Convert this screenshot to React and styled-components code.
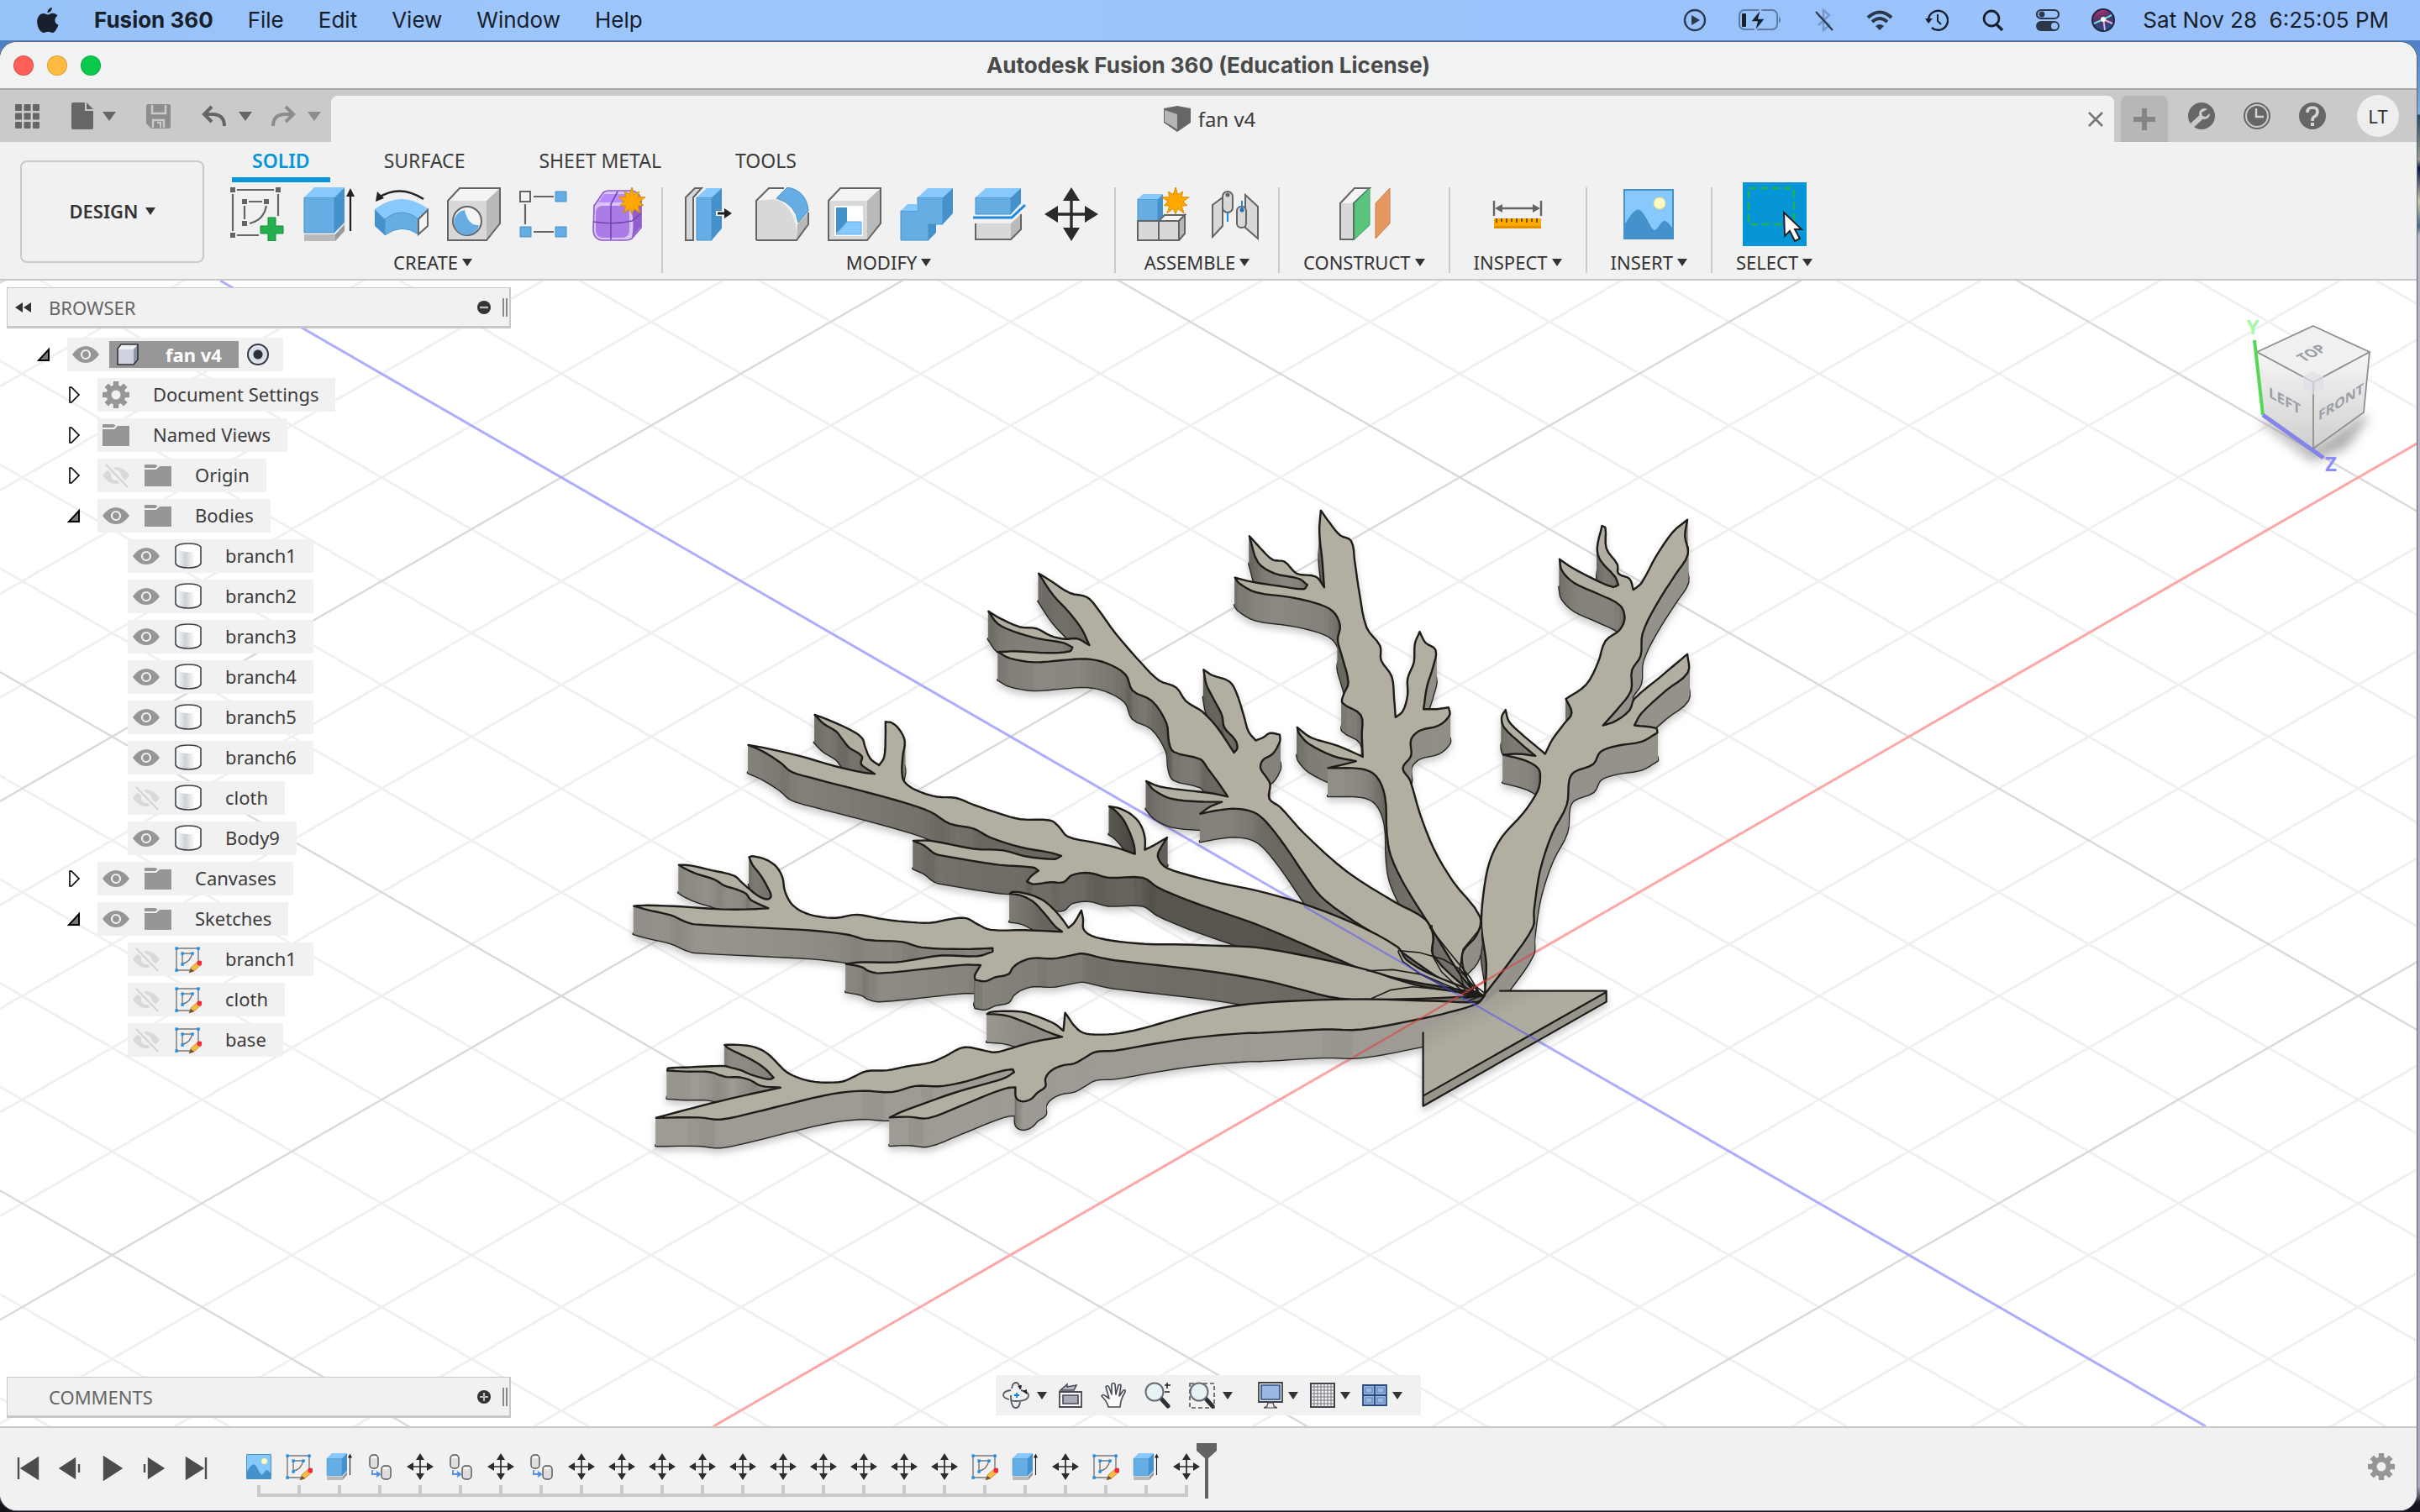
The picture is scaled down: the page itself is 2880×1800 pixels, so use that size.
import React from "react";
import styled, { createGlobalStyle, css } from "styled-components";

const UI = '"Noto Sans", "Open Sans", sans-serif';
const SYS = 'Inter, "Liberation Sans", sans-serif';

const Global = createGlobalStyle`
  *, *::before, *::after { box-sizing: border-box; }
  body { margin: 0; background: #7f9cc4; }
  button { font: inherit; color: inherit; background: none; border: 0; padding: 0; margin: 0; cursor: default; }
  ul, ol { list-style: none; margin: 0; padding: 0; }
  svg { display: block; flex: none; }
`;

/* ---------- shell ---------- */

const Desktop = styled.div`
  min-height: 100vh;
  display: flex;
  flex-direction: column;
  font-family: ${UI};
  font-size: 22px;
  line-height: 30px;
  color: #3c3c3c;
  background: linear-gradient(#4f7fc4 50px, #7fa9e0 136px, #2d4a63 137px, #9a9f8e 190px, #0b1547 200px, #c9c4a8 240px, #4b6a84 270px, #b9b6c4 280px, #a9a7b5 1770px, #15151d 1790px);
`;

const MenuBar = styled.header`
  height: 48px;
  display: flex;
  align-items: center;
  justify-content: space-between;
  padding: 0 37px 0 43px;
  font-family: ${SYS};
  color: #17202c;
  background: linear-gradient(90deg, #97c2f8, #9dc6fc 30%, #99c0fa);
`;

const MenuGroup = styled.nav`
  display: flex;
  align-items: center;
  gap: ${(p) => p.$gap}px;
  font-size: 26px;
`;

const MenuItem = styled.button`
  font-weight: ${(p) => (p.$strong ? 700 : 400)};
`;

const StatusIcons = styled.div`
  display: flex;
  align-items: center;
  gap: 38px;
`;

const Clock = styled.time`
  font-size: 26px;
  white-space: pre;
`;

const AppWindow = styled.div`
  flex: 1;
  display: flex;
  flex-direction: column;
  margin: 2px 4px 2px 0;
  border-radius: 20px;
  overflow: hidden;
  background: #f1f1f1;
  box-shadow: 0 0 0 1px #5b6472;
`;

const TitleBar = styled.div`
  height: 57px;
  display: grid;
  grid-template-columns: 1fr auto 1fr;
  align-items: center;
  padding: 0 16px;
  background: #f0f3f2;
  border-bottom: 2px solid #a9a9a9;
`;

const Lights = styled.div`
  display: flex;
  gap: 16px;
`;

const Light = styled.button`
  width: 24px;
  height: 24px;
  border-radius: 50%;
  background: ${(p) => p.$color};
  border: 1px solid rgba(0, 0, 0, 0.15);
`;

const Title = styled.h1`
  margin: 0;
  font: 700 26px/32px ${SYS};
  color: #4a4a4a;
`;

/* ---------- document tabs ---------- */

const TabStrip = styled.div`
  height: 62px;
  display: flex;
  align-items: flex-end;
  background: #cacaca;
`;

const QuickAccess = styled.div`
  width: 394px;
  height: 62px;
  display: flex;
  align-items: center;
  padding-left: 18px;
  color: #666;
`;

const QuickButton = styled.button`
  display: flex;
  align-items: center;
  gap: 10px;
  margin-right: ${(p) => p.$after || 0}px;
  color: ${(p) => (p.$dim ? "#8d8d8d" : "#666")};
`;

const Caret = styled.i`
  display: inline-block;
  flex: none;
  border: solid transparent;
  border-width: ${(p) => (p.$big ? "11px 8px 0" : "9px 6px 0")};
  border-top-color: currentColor;
`;

const DocTab = styled.div`
  flex: 1;
  height: 55px;
  display: flex;
  align-items: center;
  padding-right: 13px;
  border-radius: 8px 8px 0 0;
  background: #f1f1f1;
`;

const DocName = styled.button`
  flex: 1;
  display: flex;
  align-items: center;
  justify-content: center;
  gap: 9px;
  font-size: 24px;
`;

const NewTab = styled.button`
  width: 56px;
  height: 55px;
  margin-left: 8px;
  display: grid;
  place-items: center;
  border-radius: 8px 8px 0 0;
  color: #858585;
  background: #b7b7b7;
`;

const Account = styled.div`
  height: 62px;
  display: flex;
  align-items: center;
  gap: 34px;
  padding: 0 21px 0 24px;
`;

const Avatar = styled.button`
  width: 50px;
  height: 50px;
  margin-left: 3px;
  border-radius: 50%;
  background: #eee;
  color: #333;
`;

/* ---------- ribbon ---------- */

const Ribbon = styled.section`
  display: flex;
  height: 165px;
  padding-left: 24px;
  border-bottom: 2px solid #c8c8c8;
  background: #f1f1f1;
`;

const Workspace = styled.button`
  width: 219px;
  height: 122px;
  margin-top: 22px;
  padding-bottom: 2px;
  display: flex;
  align-items: center;
  justify-content: center;
  gap: 8px;
  font-weight: 600;
  color: #333;
  border: 2px solid #c9c9c9;
  border-radius: 8px;
`;

const RibbonBody = styled.div`
  display: flex;
  flex-direction: column;
`;

const RibbonTabs = styled.div`
  display: flex;
  gap: 40px;
  height: 48px;
  padding-left: 33px;
  font-size: 23px;
`;

const RibbonTab = styled.button`
  padding: 2px 24px 0;
  border-bottom: 6px solid transparent;
  ${(p) =>
    p.$active &&
    css`
      color: #0696d7;
      font-weight: 600;
      border-bottom-color: #0696d7;
    `}
`;

const Groups = styled.div`
  display: flex;
  padding-top: 6px;
`;

const Group = styled.div`
  height: 102px;
  display: flex;
  flex-direction: column;
  align-items: center;
  padding: 0 ${(p) => (p.$wide ? 0 : 28)}px;
  border-right: 2px solid ${(p) => (p.$last ? "transparent" : "#cbcbcb")};
`;

const Tools = styled.div`
  display: flex;
  gap: 22px;
  padding: ${(p) => (p.$wide ? "0 19px 0 24px" : 0)};
  ${Group}:first-child & {
    padding-left: 31px;
  }
`;

const Tool = styled.button`
  width: 64px;
  height: 64px;
  display: grid;
  place-items: center;
  ${(p) =>
    p.$active &&
    css`
      width: 76px;
      height: 76px;
      margin: -6px 0;
      background: #0696d7;
    `}
`;

const GroupLabel = styled.button`
  display: flex;
  align-items: center;
  gap: 5px;
  margin-top: 10px;
  color: #333;
`;

/* ---------- viewport ---------- */

const Viewport = styled.main`
  position: relative;
  flex: 1;
  display: flex;
  flex-direction: column;
  justify-content: space-between;
  padding: 8px 8px 10px;
  background: #fff;
  overflow: hidden;
`;

const SceneSvg = styled.svg`
  position: absolute;
  inset: 0;
  width: 100%;
  height: 100%;
`;

const CubeSvg = styled.svg`
  position: absolute;
  top: 26px;
  right: 26px;
`;

const Side = styled.aside`
  position: relative;
  width: 600px;
`;

const PanelBar = styled.div`
  height: 49px;
  width: 600px;
  display: flex;
  align-items: center;
  padding: 0 2px 0 9px;
  color: #666;
  background: #f1f1f1;
  border: 2px solid #c8c8c8;
  border-width: 1px 2px 3px 1px;
`;

const PanelName = styled.h2`
  flex: 1;
  margin: 0;
  padding-left: ${(p) => (p.$indent ? 40 : 21)}px;
  font: 400 22px/30px ${UI};
`;

const Grip = styled.i`
  width: 6px;
  height: 22px;
  margin-left: 14px;
  border: solid #888;
  border-width: 0 2px;
`;

const Tree = styled.ul`
  padding-top: 11px;
`;

const Row = styled.li`
  height: 40px;
  margin-bottom: 8px;
  display: flex;
  align-items: center;
  padding-left: ${(p) => p.$depth * 36 + 36}px;
`;

const Twisty = styled.button`
  width: 36px;
  display: flex;
  height: 20px;
`;

const Chip = styled.div`
  height: 40px;
  display: flex;
  align-items: center;
  gap: 18px;
  padding: 0 20px 0 6px;
  background: #f1f1f1;
`;

const Label = styled.span`
  padding: 0 0 2px 10px;
`;

const Selected = styled.div`
  height: 32px;
  display: flex;
  align-items: center;
  gap: 32px;
  padding: 0 20px 0 9px;
  margin: 0 -8px 0 -6px;
  font-weight: 700;
  color: #fff;
  background: #979797;
`;

const Activate = styled.input`
  appearance: none;
  width: 26px;
  height: 26px;
  margin: 0 -3px 0 0;
  border: 2px solid #333a48;
  border-radius: 50%;
  background: radial-gradient(circle, #2c3038 0 5px, #d5dae4 6px, #eef1f6);
`;

const BottomRow = styled.div`
  position: relative;
  display: grid;
  grid-template-columns: 1fr auto 1fr;
  align-items: start;
`;

const NavBar = styled.div`
  display: flex;
  align-items: center;
  height: 48px;
  width: 506px;
  margin-top: -2px;
  padding-left: 8px;
  color: #333;
  background: #f1f1f1;
`;

const NavTool = styled.button`
  display: flex;
  align-items: center;
  gap: ${(p) => p.$gap || 9}px;
  margin-right: ${(p) => p.$after}px;
`;

/* ---------- timeline ---------- */

const Timeline = styled.footer`
  height: 100px;
  display: flex;
  align-items: flex-start;
  padding: 18px 26px 0 18px;
  border-top: 2px solid #c8c8c8;
  background: #f1f1f1;
`;

const Transport = styled.div`
  display: flex;
  gap: 18px;
  padding-top: 14px;
  color: #4c4c4c;
`;

const Steps = styled.ol`
  display: flex;
  margin-left: 34px;
  padding-top: 12px;
`;

const Step = styled.li`
  width: 48px;
  display: flex;
  flex-direction: column;
  align-items: center;
  gap: 6px;
  &::after {
    content: "";
    align-self: stretch;
    height: 14px;
    border-bottom: 4px solid #c9c9c9;
    background: linear-gradient(#c9c9c9, #c9c9c9) center / 4px 100% no-repeat;
  }
  &:first-child::after {
    margin-left: 22px;
    background-position: left;
  }
  &:last-child::after {
    margin-right: 22px;
    background-position: right;
  }
`;

const StepButton = styled.button`
  width: 32px;
  height: 32px;
`;

const Playhead = styled.svg`
  margin-left: -12px;
`;

const TimelineSettings = styled.button`
  margin: 12px 0 0 auto;
`;

/* ---------- icon palette ---------- */

const B1 = "#87c9fd";
const B2 = "#66ade3";
const B3 = "#4591cc";
const G1 = "#f4f4f4";
const G2 = "#d8d8d8";
const G3 = "#b9b9b9";
const LN = "#646464";

const I = ({ s = 64, w, h, v = "0 0 64 64", children }) => (
  <svg width={w || s} height={h || s} viewBox={v} fill="none" aria-hidden="true">
    {children}
  </svg>
);

const Star = ({ x, y, r = 16 }) => {
  const pts = [];
  for (let i = 0; i < 20; i++) {
    const a = (Math.PI * i) / 10 - Math.PI / 2;
    const q = i % 2 ? r * 0.52 : i % 4 === 0 ? r : r * 0.86;
    pts.push(`${(x + Math.cos(a) * q).toFixed(1)},${(y + Math.sin(a) * q).toFixed(1)}`);
  }
  return <polygon points={pts.join(" ")} fill="#ffa800" stroke="#d98c00" />;
};

const SketchIcon = () => (
  <I>
    <path d="M8 3h44M3 8v44M8 57h26M57 8v26M22 17h16M17 22v16M43 22q-3 17-20 21" stroke={LN} strokeWidth="2.2" />
    {[[3, 3], [57, 3], [3, 57], [17, 17], [43, 17], [17, 43]].map(([x, y]) => (
      <rect key={`${x}-${y}`} x={x - 3} y={y - 3} width="6" height="6" fill={LN} />
    ))}
    <path d="M45 36h9v10h9v9h-9v9h-9v-9h-9v-9h9z" fill="#22b14c" stroke="#178a39" />
  </I>
);

const ExtrudeIcon = ({ s }) => (
  <I s={s}>
    <path d="M2 56h37v8H2z" fill={G3} />
    <path d="M39 56 50 44v8L39 64z" fill="#999" />
    <path d="M2 12h36v42H2z" fill={B2} stroke={B3} />
    <path d="M2 12 14 0h36L38 12z" fill={B1} />
    <path d="M38 12 50 0v42L38 54z" fill={B3} />
    <path d="M57 52V8" stroke="#222" strokeWidth="2.2" />
    <path d="m57 1 5 10H52z" fill="#222" />
  </I>
);

const RevolveIcon = () => (
  <I>
    <path d="M5 12Q30-4 58 14" stroke="#222" strokeWidth="2.6" />
    <path d="m1 17 2-12 8 8z" fill="#222" />
    <path d="M0 26Q32 2 64 26L52 38Q32 22 12 38z" fill={B1} />
    <path d="M12 38Q32 22 52 38v18Q32 42 12 57z" fill={B2} stroke={B3} />
    <path d="m0 26 12 12v19L0 46z" fill={B3} />
    <path d="m63 27-11 11v18l11-10z" fill={G1} stroke={LN} strokeWidth="2" />
  </I>
);

const Box = ({ children }) => (
  <>
    <path d="M1 16h46v47H1z" fill={G2} />
    <path d="M1 16 15 1h48L47 16z" fill={G1} />
    <path d="M47 16 63 1v42L47 63z" fill={G3} />
    <path d="M1 63V16L15 1h48v42L47 63z" stroke={LN} strokeWidth="2" />
    {children}
  </>
);

const HoleIcon = () => (
  <I>
    <Box>
      <circle cx="24" cy="40" r="17" fill={G1} stroke={LN} strokeWidth="2" />
      <path d="M21 27q4 19 17 18a15 15 0 1 1-17-18z" fill={B2} />
    </Box>
  </I>
);

const PatternIcon = () => (
  <I>
    <path d="M17 11h24M7 20v24M17 53h24" stroke={LN} strokeWidth="2.2" />
    <path d="M1 5h12v12H1z" fill={G1} stroke={LN} strokeWidth="2" />
    <path d="M43 5h13v12H43zM1 47h13v12H1zM43 47h13v12H43z" fill={B2} stroke={B3} />
  </I>
);

const FormIcon = () => (
  <I>
    <path d="M3 22 14 6q3-2 7-2h25q10 0 13 10v34L48 61q-3 2-8 2H12Q3 62 2 52z" fill="#d9c3f8" stroke="#8a5cc9" strokeWidth="1.6" />
    <path d="M48 30 59 18v28L48 60q3-16 0-30z" fill="#8f5fd0" />
    <rect x="5" y="22" width="40" height="38" rx="8" fill="#ab7ce6" />
    <path d="M15 8h32L40 18H8z" fill="#b78bff" />
    <path d="M2 41q24 4 46-1l11-9M23 62V20l8-15" stroke="#7245b5" strokeWidth="1.6" />
    <Star x={48} y={17} r={17} />
  </I>
);

const PressPullIcon = () => (
  <I>
    <path d="M3 12 14 1h8L12 12v51H3z" fill={G2} stroke={LN} strokeWidth="2" />
    <path d="M16 12h18v51H16z" fill={B2} stroke={B3} />
    <path d="M16 12 28 1h18L34 12z" fill={B1} />
    <path d="M34 12 46 1v48L34 63z" fill={B3} />
    <path d="M39 28h10v6H39z" fill="#fff" />
    <path d="M41 31h11" stroke="#222" strokeWidth="3" />
    <path d="m49 25 9 6-9 6z" fill="#222" />
  </I>
);

const FilletIcon = () => (
  <I>
    <path d="M1 16 16 1h14L24 14q24 10 25 42v7H1z" fill={G2} />
    <path d="M1 16 16 1h18L24 14z" fill={G1} />
    <path d="M50 44 63 30v14L49 63z" fill={G3} />
    <path d="M1 63V16L16 1h18M63 30v14L49 63H1" stroke={LN} strokeWidth="2" />
    <path d="M25 13 38 0Q61 4 63 28L51 42Q48 20 25 13z" fill={B2} stroke={B3} />
  </I>
);

const ShellIcon = () => (
  <I>
    <Box>
      <path d="M8 22h34v36H8z" fill="#fff" />
      <path d="M10 24h13v18L10 55z" fill={B3} />
      <path d="m10 56 13-15h17v15z" fill={B1} stroke={B2} />
    </Box>
  </I>
);

const CombineIcon = () => (
  <I>
    <path d="M1 28h20V12h30v32H34v19H1z" fill={B2} stroke={B3} />
    <path d="m1 28 8-8h12v8zM21 12 33 1h30L51 12z" fill={B1} />
    <path d="M51 12 63 1v30L51 44zM34 44h9v10l-9 9z" fill={B3} />
  </I>
);

const SplitIcon = () => (
  <I>
    <path d="M4 12h42v20H4z" fill={B2} stroke={B3} />
    <path d="M4 12 16 1h42L46 12z" fill={B1} />
    <path d="M46 12 58 1v18L46 32z" fill={B3} />
    <path d="M1 36h46l16-15" stroke="#1d8ae0" strokeWidth="3" />
    <path d="M4 43h42v19H4z" fill={G2} />
    <path d="m46 43 12-11v18L46 62z" fill={G3} />
    <path d="M4 43v19h42l12-12V32" stroke={LN} strokeWidth="2" />
  </I>
);

const MoveIcon = ({ s }) => (
  <I s={s}>
    <path d="M32 8v48M8 32h48" stroke="#2b2b2b" strokeWidth="3.4" />
    <path d="m32 0 10 16H22zM32 64 22 48h20zM0 32l16-10v20zM64 32 48 42V22z" fill="#2b2b2b" />
  </I>
);

const NewComponentIcon = () => (
  <I>
    <path d="M2 14h24v26H2z" fill={B2} stroke={B3} />
    <path d="m2 14 6-6h24l-6 6z" fill={B1} />
    <path d="m26 14 6-6v26l-6 6z" fill={B3} />
    <path d="M2 40h25v23H2zM27 40h24v23H27z" fill={G2} stroke={LN} strokeWidth="2" />
    <path d="m27 40 7-7h24l-7 7z" fill={G1} stroke={LN} strokeWidth="2" />
    <path d="m51 40 7-7v22l-7 8z" fill={G3} stroke={LN} strokeWidth="2" />
    <Star x={47} y={17} r={17} />
  </I>
);

const JointIcon = () => (
  <I>
    <path d="M5 21 17 12v34L5 59z" fill={G2} stroke={LN} strokeWidth="2" />
    <rect x="17" y="5" width="12" height="25" rx="6" fill={G2} stroke={LN} strokeWidth="2" />
    <circle cx="23" cy="9" r="2.5" fill={LN} />
    <path d="M44 9 59 23v38L44 48z" fill={G2} stroke={LN} strokeWidth="2" />
    <rect x="34" y="23" width="11" height="25" rx="5" fill={G2} stroke={LN} strokeWidth="2" />
    <path d="M40 16v12M23 30v11" stroke="#1d8ae0" strokeWidth="2" />
    <circle cx="40" cy="27" r="2.5" fill="#1d6fb8" />
  </I>
);

const ConstructIcon = () => (
  <I>
    <path d="M4 62V19L21 1h18L20 19v43z" stroke={LN} strokeWidth="2" fill={G1} />
    <path d="M5 19h14v42H5z" fill={G2} />
    <path d="M21 19 39 1v44L21 62z" fill="#5ac47d" stroke="#3ca862" />
    <path d="M46 19 63 1v42L46 61z" fill="#e49761" stroke="#cc7c43" />
  </I>
);

const MeasureIcon = () => (
  <I>
    <path d="M4 16v18M60 16v18M10 25h44" stroke={LN} strokeWidth="2.4" />
    <path d="m5 25 9-5v10zM59 25l-9-5v10z" fill={LN} />
    <path d="M4 37h56v11H4z" fill="#ffa800" />
    <path d="M4 46h56v3H4z" fill="#e08f00" />
    <path d="M7 37v5M13 37v4M19 37v5M25 37v4M31 37v5M37 37v4M43 37v5M49 37v4M55 37v5" stroke="#7a5200" strokeWidth="2" />
  </I>
);

const ImageIcon = ({ s }) => (
  <I s={s}>
    <path d="M3 3h58v58H3z" fill={B1} stroke={B3} strokeWidth="2" />
    <circle cx="45" cy="19" r="7" fill="#fffbc4" stroke="#e8dc7a" />
    <path d="M3 45C12 30 18 22 24 29c8 10 10 20 15 22 5-1 8-13 13-11 4 2 6 6 9 9v12H3z" fill={B3} />
  </I>
);

const SelectIcon = () => (
  <I s={76} v="0 0 76 76">
    <path d="M7 7h54v43H7z" stroke="#22b14c" strokeWidth="2.4" strokeDasharray="9 5" />
    <path d="m49 36 1 28 6-6 6 12 6-3-6-11h8z" fill="#fff" stroke="#222" strokeWidth="2" />
  </I>
);

/* ---------- small icons ---------- */

const EyeIcon = ({ off }) => (
  <I s={32} v="0 0 32 32">
    <path d="M0 16Q7 6 16 6t16 10q-7 10-16 10T0 16z" fill={off ? "#d9d9d9" : "#969696"} />
    {off ? (
      <>
        <circle cx="16" cy="16" r="6" fill="#f1f1f1" />
        <path d="M3 1l27 29" stroke="#f1f1f1" strokeWidth="7" />
        <path d="M4 3l26 27" stroke="#d5d5d5" strokeWidth="2.4" />
      </>
    ) : (
      <circle cx="16" cy="16" r="5" stroke="#f1f1f1" strokeWidth="2.2" />
    )}
  </I>
);

const FolderIcon = () => (
  <I s={32} v="0 0 32 32">
    <path d="M0 4q0-1 1-1h12l3 2h-1l-2 2H0zM0 9h14l4-4h14v24H0z" fill="#969696" />
  </I>
);

const GearIcon = () => (
  <I s={32} v="0 0 32 32">
    <circle cx="16" cy="16" r="8.5" stroke="#969696" strokeWidth="6" />
    {[0, 45, 90, 135].map((a) => (
      <path key={a} d="M16 0v6M16 26v6" stroke="#969696" strokeWidth="6.4" transform={`rotate(${a} 16 16)`} />
    ))}
  </I>
);

const BodyIcon = () => (
  <I s={32} v="0 0 32 32">
    <defs>
      <linearGradient id="cyl">
        <stop offset="0" stopColor="#fdfdfd" />
        <stop offset=".4" stopColor="#cdd0d5" />
        <stop offset=".75" stopColor="#fff" />
      </linearGradient>
    </defs>
    <path d="M1 5q3-4 15-4t15 4v20q-3 5-15 5T1 25z" fill="url(#cyl)" />
    <path d="M2 6q3-4 14-4t14 4q-3 5-14 5T2 6z" fill="#fff" />
    <path d="M1 5q3-4 15-4t15 4v20q-3 5-15 5T1 25z" stroke="#3d4148" strokeWidth="1.6" />
  </I>
);

const SketchPencilIcon = () => (
  <I s={32} v="0 0 32 32">
    <path d="M2 3h26M2 3v26h16M28 3v17M9 9h11M9 9v12q9-1 12-12" stroke="#777" strokeWidth="1.4" />
    {[[2, 3], [28, 3], [2, 29], [9, 9], [21, 9], [9, 22]].map(([x, y]) => (
      <rect key={`${x}-${y}`} x={x - 1.6} y={y - 1.6} width="3.4" height="3.4" fill="#1a8fe8" />
    ))}
    <path d="m17 32 2-6 9-8 4 4-9 8z" fill="#f8bb44" stroke="#c98718" strokeWidth=".8" />
    <path d="m17 32 2-5 4 3z" fill="#555" />
    <circle cx="29.4" cy="20.4" r="3" fill="#f02c3c" />
  </I>
);

const ComponentIcon = () => (
  <I w={26} h={26} v="0 0 26 26">
    <path d="M1 25V6l4-5h20v18l-5 6z" fill="#eef1f6" />
    <path d="M20 7 25 1v18l-5 6z" fill="#8d95a5" />
    <path d="M1 7h19v18H1z" fill="#cdd2dc" />
    <path d="M1 25V6l4-5h20v18l-5 6z" stroke="#30343c" strokeWidth="1.6" />
  </I>
);

const Open = () => (
  <I w={16} h={20} v="0 0 16 20">
    <path d="M14 4v13H2z" fill="#777" stroke="#000" strokeWidth="2" />
  </I>
);

const Closed = () => (
  <I w={16} h={20} v="0 0 16 20">
    <path d="M3 1v18h2l9-9-9-9z" fill="#fff" stroke="#000" strokeWidth="1.6" />
  </I>
);

const PairIcon = () => (
  <I s={32} v="0 0 32 32">
    <rect x="4" y="2" width="10" height="16" rx="4" fill="#dedede" stroke="#555" strokeWidth="1.4" />
    <rect x="18" y="15" width="11" height="16" rx="4" fill="#dedede" stroke="#555" strokeWidth="1.4" />
    <path d="M6 5h6M20 18h6" stroke="#fff" strokeWidth="2" />
    <path d="M7 20v5h8M12 22l4 3-4 3" stroke="#4a90e2" strokeWidth="1.8" />
  </I>
);

/* ---------- navigation bar icons ---------- */

const OrbitIcon = () => (
  <I w={32} h={32} v="0 0 32 32">
    <path d="M8 21Q1 19 1 16q0-5 9-6M22 10q9 2 9 6 0 7-15 7-4 0-6-1" stroke="#555b66" strokeWidth="1.8" />
    <path d="M11 8q1-7 5-7 4 0 5 8M21 24q-1 7-5 7-6 0-6-15" stroke="#555b66" strokeWidth="1.8" />
    <path d="M17 13v6M14 16h6" stroke="#0a7fe0" strokeWidth="1.8" />
    <path d="m18 5 5-1-1 5zM24 11l5-2v6z" fill="#222" />
  </I>
);

const LookAtIcon = () => (
  <I w={28} h={32} v="0 0 28 32">
    <path d="M1 12h26v18H1z" fill="#fafafa" stroke="#454a55" strokeWidth="1.8" />
    <path d="M5 16h18v10H5z" fill="#a9adb8" stroke="#454a55" strokeWidth="1.6" />
    <path d="m2 10 8-7v3l11-2-3 6z" fill="#b8bbc4" stroke="#454a55" strokeWidth="1.6" />
  </I>
);

const HandIcon = () => (
  <I w={30} h={32} v="0 0 30 32">
    <path
      d="M9 30Q8 24 1 17q1-3 5 0l4 3L6 6q2-3 4 1l3 8V3q2-3 4 0l1 12 3-11q3-2 3 1l-2 12 5-7q3-1 2 2-3 5-5 11l-1 7z"
      fill="#fbfbfb"
      stroke="#454a55"
      strokeWidth="1.6"
      strokeLinejoin="round"
    />
  </I>
);

const ZoomIcon = ({ windowed }) => (
  <I w={31} h={32} v="0 0 31 32">
    {windowed && <path d="M1 2h29v29H1z" stroke="#555" strokeWidth="1.6" strokeDasharray="5 3" />}
    <path d="m19 19 9 10" stroke="#2b2f38" strokeWidth="5" strokeLinecap="round" />
    <circle cx="12" cy="12" r="10.5" fill="#e6f2f3" stroke="#666c76" strokeWidth="2" />
    {!windowed && <path d="M27 1v7M24 4h7M24 12h6" stroke="#222" strokeWidth="1.6" />}
  </I>
);

const DisplayIcon = () => (
  <I w={30} h={32} v="0 0 30 32">
    <path d="M1 1h28v23H1z" fill="#f6f6f6" stroke="#3d4148" strokeWidth="1.8" />
    <path d="M4 4h22v17H4z" fill="#9ab9e2" stroke="#2c4a7c" strokeWidth="1.6" />
    <path d="M12 25h6l1 4 4 2H7l4-2z" fill="#eee" stroke="#3d4148" strokeWidth="1.2" />
  </I>
);

const GridIcon = () => (
  <I w={30} h={32} v="0 0 30 32">
    <path d="M1 2h28v28H1z" fill="#f6f6f6" stroke="#3d4148" strokeWidth="2" />
    <path d="M5 2v28M9 2v28M13 2v28M17 2v28M21 2v28M25 2v28M1 6h28M1 10h28M1 14h28M1 18h28M1 22h28M1 26h28" stroke="#6c717b" strokeWidth="1" />
  </I>
);

const ViewportsIcon = () => (
  <I w={30} h={32} v="0 0 30 32">
    <path d="M1 4h28v24H1z" fill="#9ab9e2" />
    <path d="M4 7h8v6H4zM18 7h8v6h-8zM4 19h8v6H4zM18 19h8v6h-8z" stroke="#5f84b8" strokeWidth="1.2" />
    <path d="M1 4h28v24H1zM15 4v24M1 16h28" stroke="#2a4a7c" strokeWidth="1.8" />
  </I>
);

/* ---------- 3D model ---------- */

// The outlines come from two sketches, each with its own origin and scale.
const fromWest = ([x, y]) => [740 + x / 1.96, 800 + y / 2.6133];
const fromEast = ([x, y]) => [1150 + x / 1.7422, 580 + y / 2.0632];

const pairs = (s) => s.trim().split(/\s+/).map((p) => p.split(",").map(Number));

// shade: base brightness of the walls; fade: how much they darken towards the pivot.
const BRANCHES = [
  {
    map: fromEast,
    fade: 0.06,
    pts: "1495,80 1490,120 1496,165 1470,215 1430,290 1402,360 1398,415 1380,450 1378,500 1350,545 1320,585 1345,575 1375,548 1385,520 1440,465 1495,410 1496,455 1450,500 1400,555 1385,585 1430,592 1433,603 1400,625 1350,635 1315,650 1300,680 1260,700 1250,720 1245,780 1215,850 1190,940 1177,1040 1175,1080 1130,1160 1075,1245 1078,1170 1068,1080 1072,1000 1085,920 1110,860 1155,800 1185,745 1190,710 1185,690 1160,672 1113,657 1145,655 1180,660 1150,630 1115,590 1110,565 1118,547 1125,575 1150,605 1175,630 1200,655 1215,620 1240,580 1255,555 1243,520 1285,485 1310,430 1325,378 1355,350 1365,320 1355,290 1310,262 1260,235 1235,205 1230,177 1255,197 1300,225 1340,245 1352,240 1345,220 1315,180 1308,150 1318,95 1325,100 1327,150 1350,190 1352,212 1375,225 1383,252 1400,235 1430,170 1465,110",
  },
  {
    map: fromEast,
    fade: 0.08,
    pts: "735,57 755,90 775,118 798,132 805,180 815,260 830,345 858,390 860,425 882,465 887,520 890,565 905,550 915,510 915,470 928,430 930,385 940,355 952,382 973,400 968,440 955,490 948,545 975,545 1000,541 1002,560 980,585 940,598 922,620 922,660 905,690 920,720 940,800 970,890 1010,970 1065,1055 1058,1100 1030,1140 1030,1180 1050,1235 1020,1190 960,1075 910,980 880,905 872,850 868,760 850,710 820,692 750,690 785,680 808,673 760,660 710,630 690,605 686,590 715,615 770,635 822,662 820,610 818,560 780,530 782,510 792,480 780,420 770,375 775,340 760,305 725,285 670,270 600,258 565,235 557,222 590,232 650,243 700,250 707,240 690,225 640,212 605,185 587,120 610,150 635,178 660,183 685,212 725,220 742,246 738,180 732,110",
  },
  {
    map: fromEast,
    shade: 0.98,
    fade: 0.14,
    pts: "150,212 175,230 215,260 250,270 270,295 310,360 365,435 400,475 435,492 455,525 490,552 520,590 555,652 562,640 557,620 535,590 530,560 515,525 498,485 492,448 510,462 545,477 560,505 575,560 585,600 600,622 615,615 630,604 650,608 650,625 635,655 615,670 610,690 622,712 630,730 628,765 650,785 700,850 790,945 890,1020 950,1060 968,1100 968,1150 1050,1245 1000,1220 960,1190 900,1140 850,1100 790,1055 735,1005 700,950 660,880 620,820 595,798 560,790 525,793 485,802 505,785 530,773 480,772 425,765 390,745 373,722 400,735 460,745 510,752 542,760 525,730 500,690 485,668 430,650 420,625 415,580 385,525 345,500 330,460 290,432 250,422 200,425 140,430 90,420 66,405 100,403 170,407 215,403 220,393 200,382 150,372 100,355 65,335 46,305 70,322 110,343 145,347 175,365 205,373 230,372 255,388 240,350 215,310 180,265",
  },
  {
    map: fromWest,
    shade: 0.96,
    fade: 0.36,
    pts: "295,227 340,238 420,263 500,294 560,312 590,317 570,300 558,285 560,262 530,235 515,210 500,185 470,160 450,133 480,148 530,178 560,205 568,235 580,270 600,290 612,265 615,200 615,155 630,158 648,180 660,215 655,265 655,330 670,355 700,375 735,388 780,392 820,413 880,440 930,458 1000,462 1020,482 1040,512 1100,530 1150,545 1197,566 1195,540 1185,500 1170,460 1150,430 1137,418 1160,424 1190,445 1210,475 1220,515 1220,553 1240,540 1272,515 1258,545 1250,570 1258,595 1275,612 1330,635 1400,658 1480,680 1580,717 1704,780 1810,856 1830,895 1884,938 2005,1002 1940,985 1850,965 1737,930 1681,900 1580,841 1480,785 1400,748 1320,710 1250,670 1215,640 1135,640 1090,625 1050,632 1030,654 1000,654 960,660 945,652 955,635 972,618 960,608 880,600 750,572 730,565 705,540 680,525 720,525 820,550 890,555 940,573 1010,582 1025,572 1000,562 930,545 860,515 820,487 765,472 720,435 660,407 560,370 450,332 395,310 370,282 330,248",
  },
  {
    map: fromWest,
    fade: 0.26,
    pts: "28,728 60,726 140,730 230,738 300,738 342,735 320,722 300,708 290,690 265,675 240,665 215,645 175,628 145,610 133,600 160,602 210,617 262,634 280,655 300,678 320,698 340,707 348,697 340,670 325,635 305,600 297,576 305,573 335,583 360,605 375,640 380,680 395,720 420,745 455,760 500,765 548,755 600,767 660,777 720,780 770,768 803,766 830,785 860,802 940,803 1027,808 1010,790 985,750 960,715 930,695 905,690 912,684 945,690 980,708 1005,735 1025,765 1042,796 1055,780 1072,742 1076,770 1077,800 1095,820 1140,835 1220,846 1310,848 1400,852 1480,857 1591,882 1737,926 1850,973 1951,996 2010,1008 1816,1018 1675,1016 1568,982 1500,960 1380,933 1250,912 1150,897 1115,888 1075,876 1050,881 1005,892 960,890 930,902 912,920 902,940 870,950 848,962 825,958 823,945 837,912 800,911 720,922 600,937 575,930 560,918 523,908 560,903 640,903 690,893 745,882 830,884 865,870 865,859 800,862 700,857 655,840 570,833 530,818 450,805 330,796 170,785 145,775 115,757 60,740",
  },
  {
    map: fromWest,
    pts: "80,1387 150,1362 220,1338 290,1316 345,1300 370,1293 335,1290 318,1284 300,1270 275,1261 245,1260 228,1254 210,1246 190,1243 150,1243 106,1240 108,1233 150,1230 200,1227 240,1226 258,1232 280,1240 300,1252 325,1262 345,1267 354,1262 335,1235 305,1208 270,1185 248,1170 240,1160 270,1160 300,1164 325,1175 345,1193 365,1220 385,1245 415,1264 450,1275 480,1277 515,1274 540,1260 570,1242 620,1239 665,1227 720,1215 755,1195 785,1173 805,1167 840,1176 870,1183 900,1174 935,1160 970,1148 1027,1135 1010,1128 985,1115 945,1092 905,1072 880,1066 852,1064 860,1058 900,1055 940,1059 980,1077 1010,1095 1030,1116 1032,1090 1034,1060 1042,1075 1055,1100 1075,1122 1110,1128 1160,1124 1220,1107 1290,1080 1380,1050 1470,1032 1591,1022 1737,1018 1906,1024 1996,1026 2013,1006 1996,1031 1929,1059 1867,1078 1726,1112 1636,1112 1501,1122 1450,1124 1340,1137 1240,1157 1150,1178 1105,1182 1080,1200 1055,1218 1025,1225 1000,1242 988,1265 988,1290 970,1308 955,1328 935,1336 920,1325 918,1292 900,1294 860,1312 790,1350 715,1388 670,1384 625,1386 650,1370 720,1335 790,1303 860,1277 895,1262 915,1245 912,1236 890,1240 850,1255 790,1278 740,1289 685,1288 630,1307 560,1303 490,1313 400,1340 310,1370 230,1392 180,1386",
  },
];

const HEIGHT = 33;

// Catmull-Rom smoothing that keeps sharp tips sharp.
function smooth(points) {
  const n = points.length;
  const tangent = points.map((p, i) => {
    const a = points[(i + n - 1) % n];
    const b = points[(i + 1) % n];
    const u = [p[0] - a[0], p[1] - a[1]];
    const v = [b[0] - p[0], b[1] - p[1]];
    const cos = (u[0] * v[0] + u[1] * v[1]) / (Math.hypot(...u) * Math.hypot(...v) || 1);
    if (cos < 0.35) return null;
    const len = Math.hypot(b[0] - a[0], b[1] - a[1]) || 1;
    return [(b[0] - a[0]) / len, (b[1] - a[1]) / len];
  });
  const out = [];
  for (let i = 0; i < n; i++) {
    const p = points[i];
    const q = points[(i + 1) % n];
    const d = Math.hypot(q[0] - p[0], q[1] - p[1]);
    const chord = [q[0] - p[0], q[1] - p[1]];
    const m0 = tangent[i] ? tangent[i].map((t) => t * d) : chord;
    const m1 = tangent[(i + 1) % n] ? tangent[(i + 1) % n].map((t) => t * d) : chord;
    for (let k = 0; k < 4; k++) {
      const t = k / 4;
      const h0 = 2 * t ** 3 - 3 * t ** 2 + 1;
      const h1 = t ** 3 - 2 * t ** 2 + t;
      const h2 = -2 * t ** 3 + 3 * t ** 2;
      const h3 = t ** 3 - t ** 2;
      out.push([0, 1].map((j) => h0 * p[j] + h1 * m0[j] + h2 * q[j] + h3 * m1[j]));
    }
  }
  return out;
}

const toPath = (pts, dy = 0) => `M${pts.map(([x, y]) => `${x.toFixed(1)} ${(y + dy).toFixed(1)}`).join("L")}Z`;

function wallColor(a, b, shade, fade) {
  const dx = Math.abs(b[0] - a[0]) || 0.01;
  const slope = ((b[1] - a[1]) * Math.sign(b[0] - a[0] || 1)) / dx;
  const tilt = Math.atan(slope) / (Math.PI / 2);
  const near = Math.min(1, Math.max(0, (a[0] - 850) / 550));
  const k = (tilt < 0 ? 158 : 154 - tilt * 46) * shade * (1 - fade * near);
  return `rgb(${Math.round(k)},${Math.round(k - 3)},${Math.round(k - 9)})`;
}

const MODEL = BRANCHES.map(({ map, pts, shade = 1, fade = 0 }) => {
  const top = smooth(pairs(pts).map(map));
  const walls = top
    .map((a, i) => [a, top[(i + 1) % top.length]])
    .sort((p, q) => p[0][1] + p[1][1] - q[0][1] - q[1][1])
    .map(([a, b]) => ({
      d: toPath([a, b, [b[0], b[1] + HEIGHT], [a[0], a[1] + HEIGHT]]),
      color: wallColor(a, b, shade, fade),
    }));
  return { top: toPath(top), bottom: toPath(top, HEIGHT), walls };
});

const ORIGIN = [1737.2, 1185.6];
const STEP = 123.46;
const SLOPE = 0.57735;

const gridLines = () => {
  const lines = [];
  for (let k = -20; k <= 20; k++) {
    if (k === 0) continue;
    const major = k % 5 === 0;
    for (const dir of [1, -1]) {
      const c = ORIGIN[1] - dir * SLOPE * ORIGIN[0] + k * STEP;
      lines.push({ key: `${k}:${dir}`, major, y1: c, y2: c + dir * SLOPE * 2880 });
    }
  }
  return lines.sort((a, b) => a.major - b.major);
};

const GRID = gridLines();

const at = (s) => toPath(pairs(s).map(fromEast));
const openAt = (s) => at(s).replace("Z", "");

const Model = styled.g`
  filter: drop-shadow(0 5px 4px rgba(60, 60, 60, 0.28));
`;

const Scene = () => (
  <SceneSvg viewBox="0 334 2876 1364" preserveAspectRatio="xMidYMid slice" aria-label="3D model of a fan with six branches" role="img">
    <defs>
      <linearGradient id="plate" gradientUnits="userSpaceOnUse" x1="1735" y1="1190" x2="1755" y2="1230">
        <stop offset="0" stopColor="#9b988e" />
        <stop offset="1" stopColor="#aeab9f" />
      </linearGradient>
    </defs>
    {GRID.map((l) => (
      <line key={l.key} x1="0" y1={l.y1} x2="2880" y2={l.y2} stroke={l.major ? "#d9d9d9" : "#f0f0f0"} strokeWidth={l.major ? 2.4 : 2.8} />
    ))}
    <path d="M262 334 2625 1698" stroke="#adadff" strokeWidth="3" />
    <path d="M849 1698 2880 526" stroke="#ffa6a6" strokeWidth="3" />
    <Model strokeLinejoin="round">
      {MODEL.map((m, i) => (
        <g key={i}>
          <path d={m.bottom} fill="#8d8b83" stroke="#26241f" strokeWidth="3.6" />
          {m.walls.map((w, j) => (
            <path key={j} d={w.d} fill={w.color} stroke={w.color} strokeWidth="0.8" />
          ))}
          <path d={m.top} fill="#b2aea2" stroke="#1e1c19" strokeWidth="2.4" />
        </g>
      ))}
      <path d={at("1105,1237 1327,1237 947,1495 947,1322 1060,1280")} fill="url(#plate)" />
      <path d={at("1327,1237 1327,1264 947,1520 947,1495")} fill="#97948a" />
      <path d={openAt("1105,1237 1327,1237 1327,1264 947,1520 947,1338")} fill="none" stroke="#1e1c19" strokeWidth="2.2" />
      <path d={openAt("1327,1240 947,1495")} fill="none" stroke="#1e1c19" strokeWidth="2.2" />
    </Model>
    <g fill="none" stroke="#1e1c19" strokeWidth="1.6">
      <path d={openAt("895,1138 940,1143 990,1160 1025,1185 1050,1225 1070,1250")} />
      <path d={openAt("895,1140 905,1165 940,1195 990,1225 1040,1250")} />
      <path d={openAt("830,1188 885,1185 945,1197 1000,1225 1050,1250")} />
      <path d={openAt("840,1256 880,1235 925,1227 1000,1235 1060,1252")} />
      <path d={openAt("965,1075 968,1110 966,1150 985,1190 1030,1240")} />
      <path d={openAt("1068,1080 1030,1135 1022,1190 1035,1240")} />
      <path d={openAt("960,1080 1000,1140 1045,1205 1068,1250 1030,1256 1075,1246 1040,1262")} />
      <path d={openAt("1025,1190 1060,1235 1040,1250 1055,1225 1075,1243")} />
    </g>
    <path d="M1552 1079 1830 1239" stroke="#4c4cff" strokeOpacity=".5" strokeWidth="2.2" />
    <path d="M1610 1259 1826 1134" stroke="#e04040" strokeOpacity=".6" strokeWidth="2.2" />
  </SceneSvg>
);

const ViewCube = () => (
  <CubeSvg width="200" height="220" viewBox="2650 360 200 220" aria-label="View cube" role="img">
    <defs>
      <linearGradient id="cubeSide" x1="0" y1="0" x2="0" y2="1">
        <stop offset="0" stopColor="#f6f6f6" />
        <stop offset="1" stopColor="#cfcfcf" />
      </linearGradient>
      <filter id="soft" x="-40%" y="-40%" width="180%" height="180%">
        <feGaussianBlur stdDeviation="7" />
      </filter>
    </defs>
    <path d="M2694 500 2753 538 2815 496 2790 530 2753 545z" fill="#777" stroke="#777" strokeWidth="8" opacity=".6" filter="url(#soft)" />
    <path d="M2686 419 2753 455v79l-60-40z" fill="url(#cubeSide)" />
    <path d="M2820 419 2753 455v79l60-43z" fill="url(#cubeSide)" />
    <path d="m2753 388 67 31-67 36-67-36z" fill="#f0f0f0" />
    <path d="m2753 388 67 31-67 36-67-36zM2753 455v79l60-43 7-72" fill="none" stroke="#8f8f8f" strokeWidth="1.8" />
    <path d="m2741 448 12-6 12 6v14l-12 8-12-8z" fill="#dde0e8" opacity=".7" />
    <path d="M2683 405 2693 494" stroke="#55d855" strokeWidth="4" />
    <path d="m2693 494 72 51" stroke="#8484ea" strokeWidth="5" />
    <g fontFamily={UI} textAnchor="middle">
      <text x="2681" y="398" fontSize="24" fontWeight="700" fill="#a2fba2">Y</text>
      <text x="2774" y="561" fontSize="24" fontWeight="700" fill="#8c8cff">Z</text>
      <g fontSize="17" fontWeight="700" fill="#9b9fa8">
        <text transform="translate(2719 483) skewY(29)">LEFT</text>
        <text transform="translate(2786 484) skewY(-32)" fontSize="16">FRONT</text>
        <text transform="translate(2756 424) rotate(-27) skewX(28)" fontSize="16">TOP</text>
      </g>
    </g>
  </CubeSvg>
);

/* ---------- data ---------- */

const GROUPS = [
  { label: "CREATE", wide: true, tools: [SketchIcon, ExtrudeIcon, RevolveIcon, HoleIcon, PatternIcon, FormIcon] },
  { label: "MODIFY", wide: true, tools: [PressPullIcon, FilletIcon, ShellIcon, CombineIcon, SplitIcon, MoveIcon] },
  { label: "ASSEMBLE", wide: true, tools: [NewComponentIcon, JointIcon] },
  { label: "CONSTRUCT", tools: [ConstructIcon] },
  { label: "INSPECT", tools: [MeasureIcon] },
  { label: "INSERT", tools: [ImageIcon] },
  { label: "SELECT", tools: [SelectIcon], active: true, last: true },
];

const TREE = [
  { name: "Document Settings", depth: 1, open: false, icon: GearIcon },
  { name: "Named Views", depth: 1, open: false, icon: FolderIcon },
  { name: "Origin", depth: 1, open: false, eye: "off", icon: FolderIcon },
  { name: "Bodies", depth: 1, open: true, eye: "on", icon: FolderIcon },
  ...["branch1", "branch2", "branch3", "branch4", "branch5", "branch6"].map((name) => ({ name, depth: 3, eye: "on", icon: BodyIcon })),
  { name: "cloth", depth: 3, eye: "off", icon: BodyIcon },
  { name: "Body9", depth: 3, eye: "on", icon: BodyIcon },
  { name: "Canvases", depth: 1, open: false, eye: "on", icon: FolderIcon },
  { name: "Sketches", depth: 1, open: true, eye: "on", icon: FolderIcon },
  ...["branch1", "cloth", "base"].map((name) => ({ name, depth: 3, eye: "off", icon: SketchPencilIcon })),
];

const STEP_ICONS = {
  i: <ImageIcon s={32} />,
  s: <SketchPencilIcon />,
  e: <ExtrudeIcon s={32} />,
  j: <PairIcon />,
  m: <MoveIcon s={32} />,
};
const STEP_NAMES = { i: "Canvas", s: "Sketch", e: "Extrude", j: "Joint", m: "Move" };
const STEPS = "isejmjmjmmmmmmmmmmsemsem".split("");

/* ---------- sections ---------- */

const StatusArea = () => (
  <MenuGroup $gap={33} aria-label="Status">
    <StatusIcons>
      <I s={28} v="0 0 28 28">
        <circle cx="14" cy="14" r="12" stroke="#2b3849" strokeWidth="2.4" />
        <path d="m10 8 10 6-10 6z" fill="#2b3849" />
      </I>
      <I w={52} h={28} v="0 0 52 28">
        <rect x="1" y="2" width="45" height="23" rx="6" stroke="#5d7ba3" strokeWidth="2" />
        <path d="M48 9q4 5 0 9z" fill="#5d7ba3" />
        <rect x="4" y="6" width="5" height="16" rx="1" fill="#17202c" />
        <path d="M27 0 14 16h8l-3 12 13-16h-8z" fill="#17202c" stroke="#9bc3fb" strokeWidth="1.6" />
      </I>
      <I w={24} h={28} v="0 0 24 28">
        <path d="m5 8 13 12-7 6V2l7 6L5 20" stroke="#7599cc" strokeWidth="2.4" />
        <path d="m2 4 20 22" stroke="#2b3849" strokeWidth="2.2" />
      </I>
      <I w={32} h={26} v="0 0 32 26">
        <path d="M2 10q14-13 28 0M7 15q9-8 18 0" stroke="#2b3849" strokeWidth="4" />
        <path d="m11 20q5-4 10 0l-5 5z" fill="#2b3849" />
      </I>
      <I s={28} v="0 0 28 28">
        <path d="M4 14a11.5 11.5 0 1 1 4 9" stroke="#17202c" strokeWidth="2.4" />
        <path d="m0 12 4 6 5-6z" fill="#17202c" />
        <path d="M15 7v8l4 4" stroke="#17202c" strokeWidth="2" />
      </I>
      <I s={28} v="0 0 28 28">
        <circle cx="13" cy="12" r="9" stroke="#17202c" strokeWidth="2.8" />
        <path d="m19 19 7 7" stroke="#17202c" strokeWidth="3.4" />
      </I>
      <I s={28} v="0 0 28 28">
        <rect x="1" y="2" width="26" height="10" rx="5" stroke="#2b3849" strokeWidth="2.2" />
        <circle cx="7" cy="7" r="3.4" fill="#2b3849" />
        <rect x="0" y="15" width="28" height="12" rx="6" fill="#2b3849" />
        <circle cx="22" cy="21" r="4" fill="#9bc3fb" />
      </I>
      <I s={28} v="0 0 28 28">
        <defs>
          <linearGradient id="siri" x1="0" y1="0" x2=".3" y2="1">
            <stop offset="0" stopColor="#c0396e" />
            <stop offset=".5" stopColor="#5a2f6b" />
            <stop offset="1" stopColor="#1c4f86" />
          </linearGradient>
        </defs>
        <circle cx="14" cy="14" r="13" fill="url(#siri)" stroke="#1c2740" strokeWidth="2" />
        <path d="M3 18 14 13l10-5" stroke="#5fe3d8" strokeWidth="2" />
        <path d="m14 11 2 15M14 13l11 5" stroke="#f0a7d8" strokeWidth="2" />
        <circle cx="14" cy="13" r="3" fill="#fff" />
      </I>
    </StatusIcons>
    <Clock>{"Sat Nov 28  6:25:05 PM"}</Clock>
  </MenuGroup>
);

const AppleMark = () => (
  <I w={28} h={32} v="0 0 28 32">
    <path
      d="M19 1c0 3-2.5 6-5.5 6.2C13.2 4 16 1.2 19 1zM14 9.5c1.6 0 3-1.7 6-1.7 2 0 4.2 1.1 5.5 3-4.6 2.7-3.8 9.2 1 11C25 25.5 22.5 31 19.5 31c-2 0-3-1.2-5.2-1.2S11 31 9 31C4.5 31 .5 22.5 1.2 16.5 1.8 11 5.5 8 8.5 8c2.5 0 4 1.5 5.5 1.5z"
      fill="#17202c"
    />
  </I>
);

const QuickBar = () => (
  <QuickAccess>
    <QuickButton $after={38} aria-label="Data panel">
      <I s={29} v="0 0 29 29">
        {[0, 10.5, 21].map((y) => [0, 10.5, 21].map((x) => <rect key={`${x}-${y}`} x={x} y={y} width="8" height="8" rx="1" fill="#666" />))}
      </I>
    </QuickButton>
    <QuickButton $after={36} aria-label="File">
      <I w={27} h={32} v="0 0 27 32">
        <path d="M0 2q0-2 2-2h14v10h10v20q0 2-2 2H2q-2 0-2-2zM18 0l8 8h-8z" fill="#666" />
      </I>
      <Caret $big />
    </QuickButton>
    <QuickButton $after={37} $dim aria-label="Save">
      <I s={29} v="0 0 29 29">
        <path d="M2 0h25q2 0 2 2v25q0 2-2 2H6l-6-6V2q0-2 2-2z" fill="#8d8d8d" />
        <path d="M7 1v10h16V1M8 28v-9h13v9" stroke="#cacaca" strokeWidth="2.4" />
        <path d="M13 22h4v6" stroke="#cacaca" strokeWidth="2" />
      </I>
    </QuickButton>
    <QuickButton $after={22} aria-label="Undo">
      <I w={34} h={28} v="0 0 34 28">
        <path d="M12 3 3 12l9 9M4 12h10q13 1 13 14" stroke="#666" strokeWidth="4" />
      </I>
      <Caret $big />
    </QuickButton>
    <QuickButton $dim aria-label="Redo">
      <I w={34} h={28} v="0 0 34 28">
        <path d="m18 3 9 9-9 9M26 12H16Q3 13 3 26" stroke="#8d8d8d" strokeWidth="4" />
      </I>
      <Caret $big />
    </QuickButton>
  </QuickAccess>
);

const TreeRow = ({ name, depth, open, eye, icon: Glyph }) => (
  <Row $depth={depth}>
    {open !== undefined && <Twisty aria-label={`Toggle ${name}`}>{open ? <Open /> : <Closed />}</Twisty>}
    <Chip>
      {eye && (
        <button aria-label={`Visibility of ${name}`}>
          <EyeIcon off={eye === "off"} />
        </button>
      )}
      <Glyph />
      <Label>{name}</Label>
    </Chip>
  </Row>
);

const Browser = () => (
  <Side>
    <PanelBar>
      <button aria-label="Collapse browser">
        <I w={19} h={14} v="0 0 19 14">
          <path d="M9 1v12L0 7zM19 1v12l-9-6z" fill="#333" />
        </I>
      </button>
      <PanelName>BROWSER</PanelName>
      <button aria-label="Minimize browser">
        <I s={16} v="0 0 16 16">
          <circle cx="8" cy="8" r="8" fill="#333" />
          <path d="M3 8h10" stroke="#bbb" strokeWidth="2.4" />
        </I>
      </button>
      <Grip />
    </PanelBar>
    <Tree>
      <Row $depth={0}>
        <Twisty aria-label="Toggle fan v4">
          <Open />
        </Twisty>
        <Chip>
          <button aria-label="Visibility of fan v4">
            <EyeIcon />
          </button>
          <Selected>
            <ComponentIcon />
            <span>fan v4</span>
          </Selected>
          <Activate type="radio" name="active" defaultChecked aria-label="Activate fan v4" />
        </Chip>
      </Row>
      {TREE.map((row, i) => (
        <TreeRow key={i} {...row} />
      ))}
    </Tree>
  </Side>
);

const Nav = () => (
  <NavBar role="toolbar" aria-label="Navigation">
    <NavTool $after={14} aria-label="Orbit"><OrbitIcon /><Caret /></NavTool>
    <NavTool $after={22} aria-label="Look at"><LookAtIcon /></NavTool>
    <NavTool $after={22} aria-label="Pan"><HandIcon /></NavTool>
    <NavTool $after={22} aria-label="Zoom"><ZoomIcon /></NavTool>
    <NavTool $after={30} aria-label="Fit"><ZoomIcon windowed /><Caret /></NavTool>
    <NavTool $gap={6} $after={14} aria-label="Display settings"><DisplayIcon /><Caret /></NavTool>
    <NavTool $gap={6} $after={14} aria-label="Grid and snaps"><GridIcon /><Caret /></NavTool>
    <NavTool $gap={6} $after={0} aria-label="Viewports"><ViewportsIcon /><Caret /></NavTool>
  </NavBar>
);

const TRANSPORT = [
  ["To start", "M4 3v26M27 4v24L8 16z"],
  ["Step back", "M21 5v22L4 16zM26 11v10"],
  ["Play", "M6 3v26l20-13z"],
  ["Step forward", "M9 5v22l17-11zM4 11v10"],
  ["To end", "M27 3v26M4 4v24l19-12z"],
];

const TimelineBar = () => (
  <Timeline>
    <Transport>
      {TRANSPORT.map(([name, d]) => (
        <button key={name} aria-label={name}>
          <svg width="32" height="32" viewBox="0 0 32 32">
            <path d={d} fill="currentColor" stroke="currentColor" strokeWidth="2.4" />
          </svg>
        </button>
      ))}
    </Transport>
    <Steps>
      {STEPS.map((s, i) => (
        <Step key={i}>
          <StepButton aria-label={STEP_NAMES[s]}>{STEP_ICONS[s]}</StepButton>
        </Step>
      ))}
    </Steps>
    <Playhead width="24" height="66" viewBox="0 0 24 66" aria-hidden="true">
      <path d="M0 0h24v9L14 18v48h-4V18L0 9z" fill="#636363" />
    </Playhead>
    <TimelineSettings aria-label="Timeline settings">
      <GearIcon />
    </TimelineSettings>
  </Timeline>
);

export default function App() {
  return (
    <Desktop>
      <Global />
      <MenuBar>
        <MenuGroup $gap={41}>
          <AppleMark />
          <MenuItem $strong>Fusion 360</MenuItem>
          {["File", "Edit", "View", "Window", "Help"].map((m) => (
            <MenuItem key={m}>{m}</MenuItem>
          ))}
        </MenuGroup>
        <StatusArea />
      </MenuBar>
      <AppWindow>
        <TitleBar>
          <Lights>
            <Light $color="#ff5f57" aria-label="Close window" />
            <Light $color="#ffbb40" aria-label="Minimize window" />
            <Light $color="#0ac94b" aria-label="Zoom window" />
          </Lights>
          <Title>Autodesk Fusion 360 (Education License)</Title>
          <span />
        </TitleBar>
        <TabStrip>
          <QuickBar />
          <DocTab>
            <DocName>
              <I w={32} h={31} v="0 0 32 31">
                <path d="M0 3 16 0l16 3v17L16 31 0 20z" fill="#666" />
                <path d="m1 5 15 5v18L1 19z" fill="#b3b6b5" />
              </I>
              fan v4
            </DocName>
            <button aria-label="Close tab">
              <I s={18} v="0 0 18 18">
                <path d="m1 1 16 16M17 1 1 17" stroke="#777" strokeWidth="2.6" />
              </I>
            </button>
          </DocTab>
          <NewTab aria-label="New tab">
            <I s={26} v="0 0 26 26">
              <path d="M13 0v26M0 13h26" stroke="currentColor" strokeWidth="6" />
            </I>
          </NewTab>
          <Account>
            <button aria-label="Extensions">
              <I s={32} v="0 0 32 32">
                <circle cx="16" cy="16" r="16" fill="#666" />
                <path d="M3 29 16 17" stroke="#cacaca" strokeWidth="6" />
                <path d="M23 8a6.5 6.5 0 1 0 3 5l-5 4-4-1-1-4z" fill="#cacaca" />
              </I>
            </button>
            <button aria-label="Job status">
              <I s={32} v="0 0 32 32">
                <circle cx="16" cy="16" r="15" stroke="#666" strokeWidth="2" />
                <circle cx="16" cy="16" r="12" fill="#666" />
                <path d="M15 7v10h9" stroke="#d5d5d5" strokeWidth="2.4" />
              </I>
            </button>
            <button aria-label="Help">
              <I s={32} v="0 0 32 32">
                <circle cx="16" cy="16" r="16" fill="#666" />
                <path d="M10 12q0-6 6-6t6 5q0 4-4 6-2 1-2 5" stroke="#d5d5d5" strokeWidth="3.6" />
                <path d="M14 24h4v4h-4z" fill="#d5d5d5" />
              </I>
            </button>
            <Avatar>LT</Avatar>
          </Account>
        </TabStrip>
        <Ribbon>
          <Workspace>
            DESIGN <Caret />
          </Workspace>
          <RibbonBody>
            <RibbonTabs>
              {["SOLID", "SURFACE", "SHEET METAL", "TOOLS"].map((t, i) => (
                <RibbonTab key={t} $active={i === 0}>
                  {t}
                </RibbonTab>
              ))}
            </RibbonTabs>
            <Groups>
              {GROUPS.map((g) => (
                <Group key={g.label} $wide={g.wide} $last={g.last}>
                  <Tools $wide={g.wide}>
                    {g.tools.map((T, i) => (
                      <Tool key={i} $active={g.active} aria-label={`${g.label} tool ${i + 1}`}>
                        <T />
                      </Tool>
                    ))}
                  </Tools>
                  <GroupLabel>
                    {g.label}
                    <Caret />
                  </GroupLabel>
                </Group>
              ))}
            </Groups>
          </RibbonBody>
        </Ribbon>
        <Viewport>
          <Scene />
          <ViewCube />
          <Browser />
          <BottomRow>
            <PanelBar>
              <PanelName $indent>COMMENTS</PanelName>
              <button aria-label="Expand comments">
                <I s={16} v="0 0 16 16">
                  <circle cx="8" cy="8" r="8" fill="#333" />
                  <path d="M3 8h10M8 3v10" stroke="#bbb" strokeWidth="2.2" />
                </I>
              </button>
              <Grip />
            </PanelBar>
            <Nav />
            <span />
          </BottomRow>
        </Viewport>
        <TimelineBar />
      </AppWindow>
    </Desktop>
  );
}
